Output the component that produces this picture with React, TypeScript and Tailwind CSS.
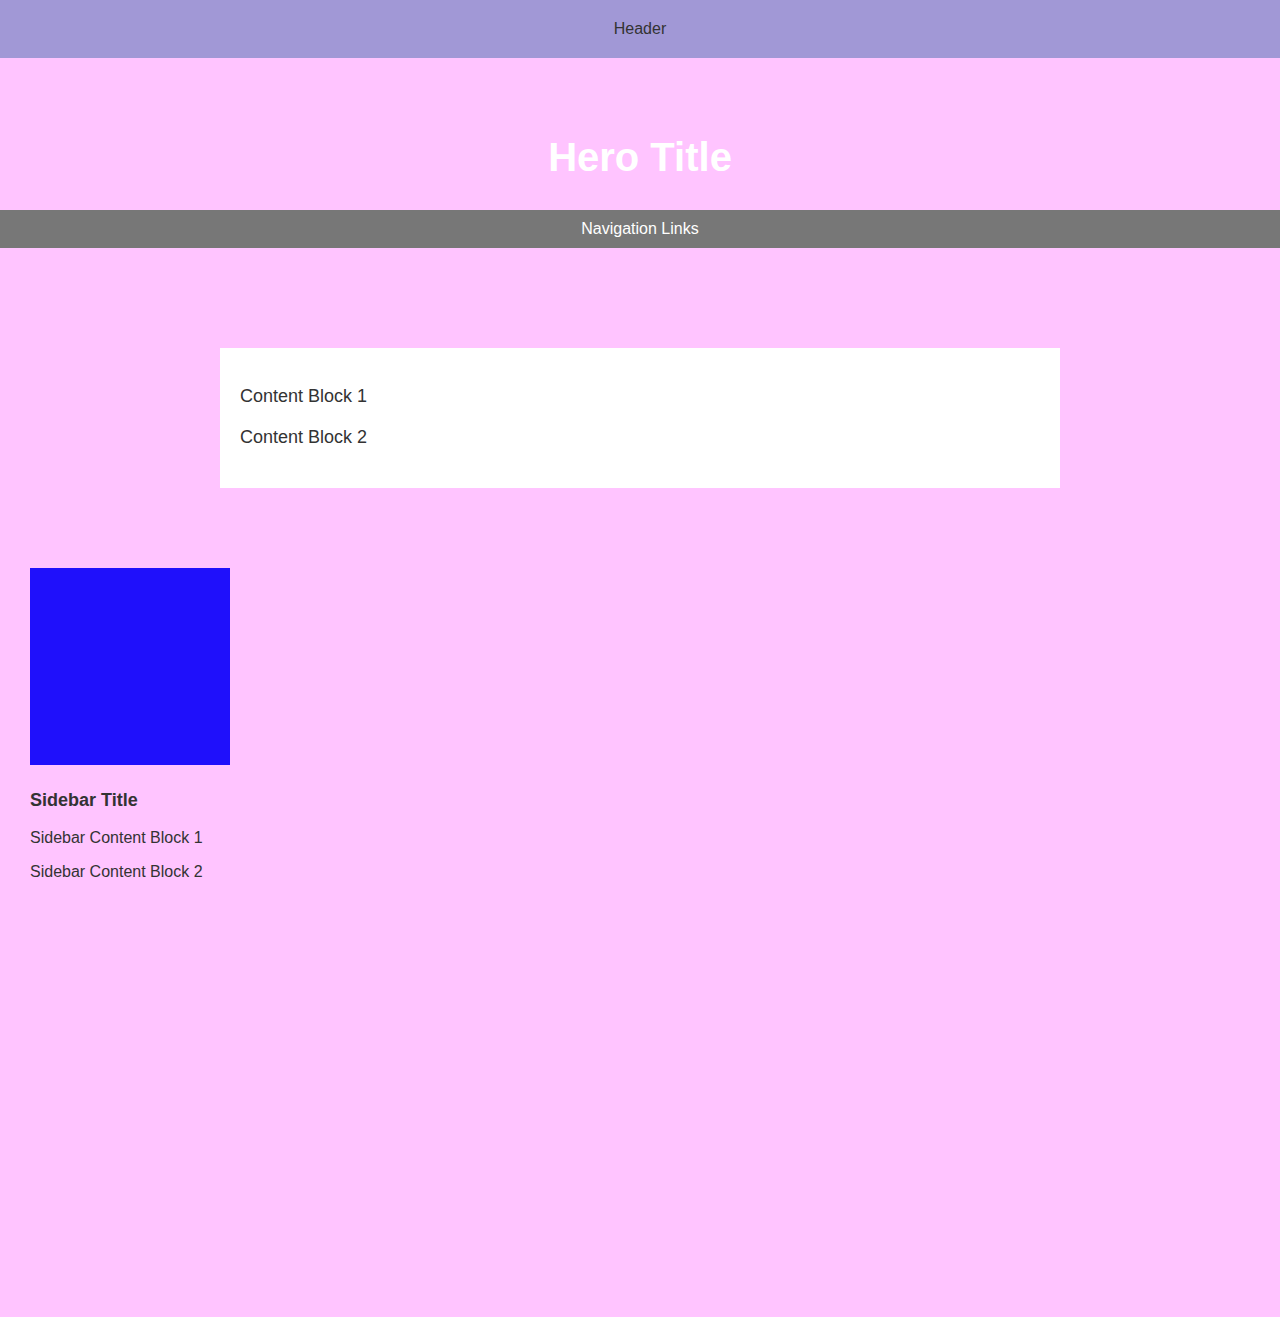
const App = () => {
  return (
    <div className="min-h-[1317px] bg-[#ffc4ff] text-[#333333] font-['Liberation_Sans',Arial,sans-serif]">
      <header className="h-[58px] bg-[#a198d6] flex items-center justify-center text-base">
        Header
      </header>

      <section className="pt-[76px] text-center">
        <h1 className="text-[40px] leading-[46px] font-bold text-white">Hero Title</h1>
        <nav className="mt-[30px] h-[38px] bg-[#777777] flex items-center justify-center text-base text-white">
          Navigation Links
        </nav>
      </section>

      <main className="pt-[100px] flex justify-center">
        <div className="w-[840px] h-[140px] bg-white px-5 pt-[38px] flex flex-col gap-5 text-lg leading-[21px]">
          <p>Content Block 1</p>
          <p>Content Block 2</p>
        </div>
      </main>

      <aside className="pt-[80px] px-[30px]">
        <div className="w-[200px] h-[197px] bg-[#1f10fb]" />
        <h3 className="mt-[25px] text-lg leading-[21px] font-bold">Sidebar Title</h3>
        <div className="mt-[18px] flex flex-col gap-[16px] text-base leading-[18px]">
          <p>Sidebar Content Block 1</p>
          <p>Sidebar Content Block 2</p>
        </div>
      </aside>
    </div>
  );
};

export default App;
